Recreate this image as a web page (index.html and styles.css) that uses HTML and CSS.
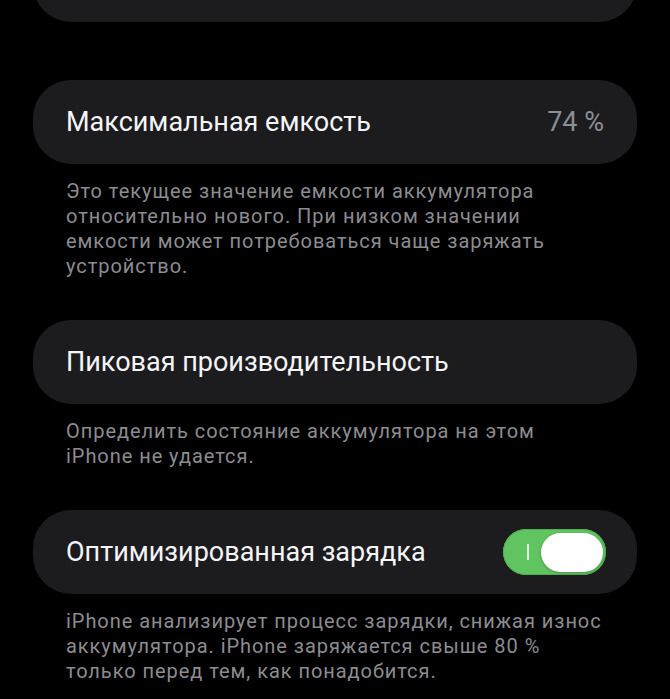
FILE: index.html
```html
<!DOCTYPE html>
<html lang="ru">
<head>
    <meta charset="UTF-8">
    <meta name="viewport" content="width=device-width, initial-scale=1.0">
    <title>Состояние аккумулятора</title>
    <link rel="stylesheet" href="styles.css">
</head>
<body>
    <div class="list">
        <div class="cell cell-cut"></div>

        <div class="cell cell-first">
            <span class="label">Максимальная емкость</span>
            <span class="value">74 %</span>
        </div>
        <p class="footer">Это текущее значение емкости аккумулятора<br>относительно нового. При низком значении<br>емкости может потребоваться чаще заряжать<br>устройство.</p>

        <div class="cell">
            <span class="label">Пиковая производительность</span>
        </div>
        <p class="footer">Определить состояние аккумулятора на этом<br>iPhone не удается.</p>

        <div class="cell">
            <span class="label">Оптимизированная зарядка</span>
            <div class="switch on">
                <span class="switch-mark"></span>
                <span class="switch-thumb"></span>
            </div>
        </div>
        <p class="footer">iPhone анализирует процесс зарядки, снижая износ<br>аккумулятора. iPhone заряжается свыше 80 %<br>только перед тем, как понадобится.</p>
    </div>
</body>
</html>
```

FILE: styles.css
```css
html, body { margin: 0; padding: 0; background: #000; }
body { font-family: Roboto, "Noto Sans", sans-serif; color: #fff; height: 699px; overflow: hidden; }
.list { padding: 0 33px; }
.cell { height: 84px; background: #1c1c1e; border-radius: 38px; padding: 0 33px; display: flex; align-items: center; justify-content: space-between; font-size: 27px; }
.cell-cut { margin-top: -62px; margin-bottom: 58px; }
.label { color: #f5f5f7; }
.value { color: #8e8e93; }
.footer { margin: 15px 0 41px; padding-left: 33px; font-size: 20px; letter-spacing: 0.95px; line-height: 25px; color: #8c8c91; white-space: nowrap; }
.switch { width: 103px; height: 46px; border-radius: 23px; box-sizing: border-box; padding: 0 3px 0 24px; display: flex; align-items: center; justify-content: space-between; margin-right: -2px; }
.switch.on { background: #60c461; box-shadow: inset 0 0 0 1px #52ad53; }
.switch-mark { width: 2px; height: 16px; background: rgba(255, 255, 255, 0.85); border-radius: 1px; }
.switch-thumb { width: 62px; height: 39px; border-radius: 20px; background: #fff; box-shadow: 0 1px 3px rgba(0, 0, 0, 0.25); }
```
